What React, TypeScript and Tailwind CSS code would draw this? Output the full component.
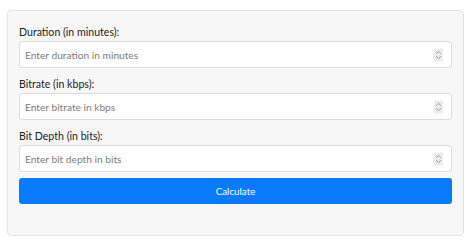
import { useState } from 'react';

const fields = [
  { id: 'duration', label: 'Duration (in minutes):', placeholder: 'Enter duration in minutes' },
  { id: 'bitrate', label: 'Bitrate (in kbps):', placeholder: 'Enter bitrate in kbps' },
  { id: 'bitDepth', label: 'Bit Depth (in bits):', placeholder: 'Enter bit depth in bits' },
];

function Spinner() {
  return (
    <span className="pointer-events-none absolute right-[9px] top-1/2 flex h-[13px] w-[9px] -translate-y-1/2 flex-col items-center justify-center bg-[#ececec]">
      <svg width="7" height="11" viewBox="0 0 7 11" fill="none" stroke="#9a9a9a" strokeWidth="1">
        <path d="M1 4.2 3.5 1.8 6 4.2" />
        <path d="M1 6.8 3.5 9.2 6 6.8" />
      </svg>
    </span>
  );
}

export default function App() {
  const [values, setValues] = useState<Record<string, string>>({});

  return (
    <div className="h-[241px] w-[474px] bg-white pl-[7px] pt-[10px] font-['Lato',sans-serif]">
      <div className="w-[457px] rounded-[4px] border border-[#e3e3e3] bg-[#f7f7f7] px-[11px] pb-[31px] pt-[12px]">
        {fields.map((f, i) => (
          <div key={f.id} className={i > 0 ? 'mt-[7px]' : ''}>
            <label htmlFor={f.id} className="block text-[10.6px] leading-[18px] text-[#222]">
              {f.label}
            </label>
            <div className="relative">
              <input
                id={f.id}
                type="text"
                inputMode="numeric"
                value={values[f.id] ?? ''}
                onChange={(e) => setValues({ ...values, [f.id]: e.target.value })}
                placeholder={f.placeholder}
                className="block h-[27px] w-full rounded-[3px] border border-[#dcdcdc] bg-white px-[5px] text-[10.2px] text-[#333] outline-none placeholder:text-[#7d7d7d]"
              />
              <Spinner />
            </div>
          </div>
        ))}
        <button className="mt-[6px] block h-[26px] w-full rounded-[3px] bg-[#0a7bff] text-[9.8px] text-white">
          Calculate
        </button>
      </div>
    </div>
  );
}
